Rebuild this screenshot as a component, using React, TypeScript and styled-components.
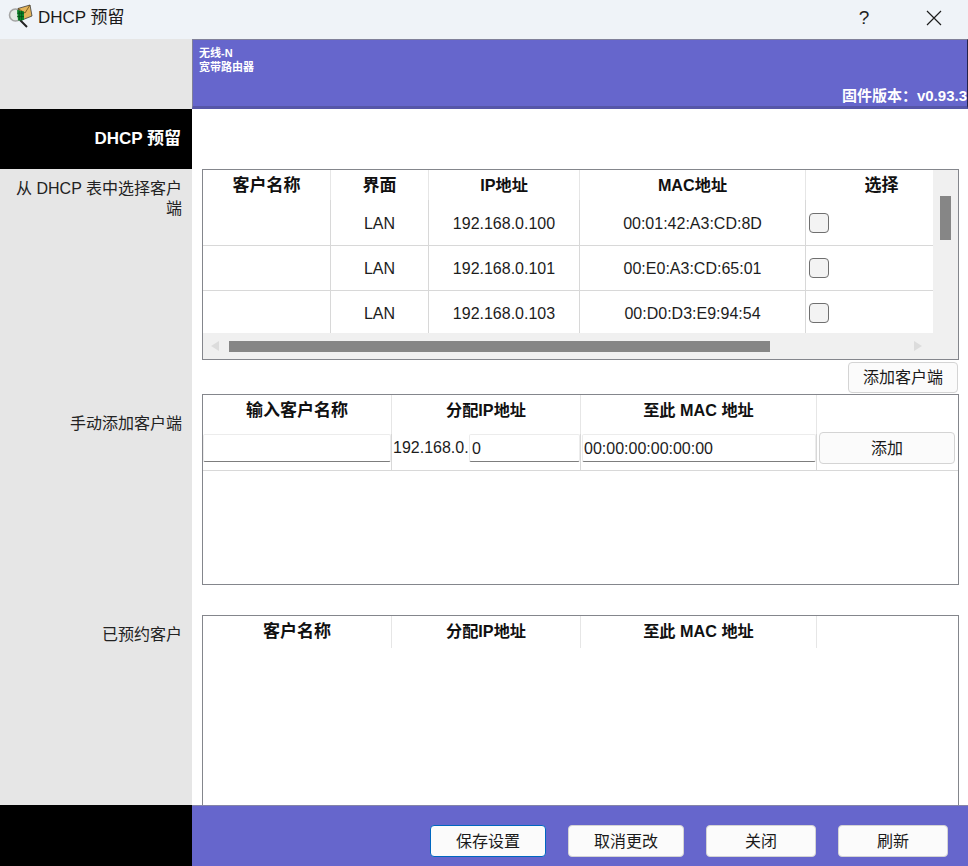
import React from "react";
import styled, { createGlobalStyle } from "styled-components";

const FONT = `"Liberation Sans", "Noto Sans CJK SC", sans-serif`;

const Global = createGlobalStyle`
  html, body { margin: 0; padding: 0; background: #fff; }
  * { box-sizing: border-box; }
  body { font-family: ${FONT}; color: #111; }
`;

const Page = styled.div`
  width: 968px; height: 866px; display: flex; flex-direction: column; overflow: hidden;
`;
const TitleBar = styled.div`
  height: 39px; flex: none; background: #eff3f8; display: flex; align-items: center; padding-left: 8px;
`;
const TitleText = styled.div`
  font-size: 17px; margin-left: 4px; color: #1a1a1a; flex: 1; white-space: nowrap; line-height: 35px; align-self: flex-start;
`;
const HelpGlyph = styled.div`
  width: 20px; font-size: 19px; color: #222; text-align: center; margin-right: 48px; margin-top: -4px;
`;
const CloseBox = styled.div`
  width: 24px; height: 24px; margin-right: 22px; display: flex; align-items: center; justify-content: center; margin-top: -4px;
`;
const Band = styled.div<{ $h: number }>`
  display: grid; grid-template-columns: 192px 1fr; height: ${p => p.$h}px; flex: none;
`;
const GreyCell = styled.div`
  background: #e6e6e6;
`;
const Banner = styled.div`
  background: #6666cc; border-top: 1px solid #80809a; border-left: 1px solid #80809a;
  border-bottom: 3px solid #5656a8; border-right: 1px solid #22224a;
  display: flex; flex-direction: column; justify-content: space-between; padding: 6px 0 1px 6px; color: #fff;
`;
const Brand = styled.div`
  font-size: 11px; font-weight: 700; line-height: 14px;
`;
const Version = styled.div`
  font-size: 15px; font-weight: 700; text-align: right; line-height: 18px; white-space: nowrap;
`;
const BlackCell = styled.div`
  background: #000; color: #fff; font-size: 17px; font-weight: 700; text-align: right; padding: 20px 11px 0 0; line-height: 20px; white-space: nowrap;
`;
const Section = styled.div<{ $h: number }>`
  display: grid; grid-template-columns: 192px 1fr; height: ${p => p.$h}px; flex: none;
`;
const SideLabel = styled.div<{ $top: number }>`
  background: #e6e6e6; font-size: 16px; line-height: 20px; color: #222; text-align: right;
  padding: ${p => p.$top}px 10px 0 12px;
`;
const Content = styled.div`
  padding: 0 9px 0 10px; display: flex; flex-direction: column; min-width: 0;
`;
const Panel = styled.div<{ $h: number; $open?: boolean }>`
  height: ${p => p.$h}px; border: 1px solid #84868c; ${p => (p.$open ? "border-bottom: none;" : "")}
  display: flex; flex-direction: column; overflow: hidden; flex: none;
`;
const ScrollBody = styled.div`
  flex: 1; display: grid; grid-template-columns: 1fr 25px; min-height: 0;
`;
const RowsClip = styled.div`
  overflow: hidden; min-width: 0;
`;
const Row = styled.div<{ $cols: string; $h: number; $sep?: boolean }>`
  display: grid; grid-template-columns: ${p => p.$cols}; height: ${p => p.$h}px;
  ${p => (p.$sep ? "border-bottom: 1px solid #d8d8d8;" : "")}
`;
const HeadCell = styled.div<{ $rule?: boolean; $shift?: number; $han?: boolean }>`
  font-size: ${p => (p.$han ? 17 : 16.2)}px; font-weight: 700; text-align: center;
  line-height: ${p => (p.$han ? 32 : 30)}px; color: #111; white-space: nowrap;
  padding-left: ${p => p.$shift ?? 0}px;
  ${p => (p.$rule ? "border-right: 1px solid #e6e6e6;" : "")}
`;
const Cell = styled.div<{ $rule?: boolean }>`
  font-size: 16px; display: flex; align-items: center; justify-content: center; padding-top: 2px; color: #1c1c1c; white-space: nowrap; min-width: 0;
  ${p => (p.$rule ? "border-right: 1px solid #d8d8d8;" : "")}
`;
const CheckCell = styled(Cell)`
  justify-content: flex-start; padding: 0 0 0 3px;
`;
const CheckBox = styled.div`
  width: 20px; height: 20px; border: 1px solid #6f6f6f; border-radius: 4px; background: #f3f3f3;
`;
const VTrack = styled.div`
  background: #f0f0f0; padding: 26px 7px 0 7px;
`;
const VThumb = styled.div`
  width: 11px; height: 44px; background: #868686;
`;
const HTrack = styled.div`
  height: 26px; flex: none; background: #f0f0f0; display: flex; align-items: center; padding-left: 8px;
`;
const ArrowL = styled.div`
  width: 0; height: 0; border-top: 5px solid transparent; border-bottom: 5px solid transparent; border-right: 8px solid #dcdcdc; margin-right: 10px;
`;
const ArrowR = styled.div`
  width: 0; height: 0; border-top: 5px solid transparent; border-bottom: 5px solid transparent; border-left: 8px solid #dcdcdc; margin-left: 144px;
`;
const HThumb = styled.div`
  width: 541px; height: 11px; background: #868686; margin-top: 1px;
`;
const Btn = styled.button<{ $w: number; $h: number; $primary?: boolean; $lift?: number }>`
  width: ${p => p.$w}px; height: ${p => p.$h}px; flex: none; font-family: ${FONT}; font-size: 16px; color: #1a1a1a;
  padding: 0 0 ${p => p.$lift ?? 2}px 0;
  background: #fbfbfb; border-radius: 4px; border: 1px solid ${p => (p.$primary ? "#0067c0" : "#d4d4d4")};
`;
const BtnRow = styled.div`
  display: flex; justify-content: flex-end; padding: 2px 1px 0 0; height: 34px; flex: none;
`;
const FieldCell = styled.div<{ $rule?: boolean; $inset?: number }>`
  display: flex; align-items: flex-start; padding-left: ${p => p.$inset ?? 0}px; font-size: 16px; color: #1c1c1c; white-space: nowrap; min-width: 0;
  ${p => (p.$rule ? "border-right: 1px solid #d8d8d8;" : "")}
`;
const Field = styled.div<{ $pad?: number }>`
  height: 28px; flex: 1; min-width: 0;
  border: 1px solid #ececec; border-bottom: 1px solid #7d7d7d; border-radius: 2px; background: #fff;
  font-size: 16px; line-height: 27px; padding-left: ${p => p.$pad ?? 1}px; color: #1c1c1c; white-space: nowrap; overflow: hidden;
`;
const FieldLead = styled.span`
  padding-left: 1px; line-height: 28px; width: 77px; flex: none; overflow: hidden;
`;
const AddCell = styled.div`
  display: flex; align-items: flex-start; padding-left: 2px;
`;
const RaisedBtn = styled(Btn)`
  margin-top: -2px;
`;
const Footer = styled.div`
  height: 61px; flex: none; display: grid; grid-template-columns: 192px 1fr;
`;
const FooterBlack = styled.div`
  background: #000;
`;
const FooterBar = styled.div`
  background: #6666cc; border-top: 1px solid #8585a8; display: flex; align-items: flex-start; padding: 19px 20px 0 238px; gap: 22px;
`;
const IconSvg = styled.svg`
  flex: none; align-self: flex-start; margin-top: 2px;
`;

const cols1 = "128px 98px 151px 226px 1fr";
const cols2 = "189px 189px 236px 1fr";

const rows = [
  ["LAN", "192.168.0.100", "00:01:42:A3:CD:8D"],
  ["LAN", "192.168.0.101", "00:E0:A3:CD:65:01"],
  ["LAN", "192.168.0.103", "00:D0:D3:E9:94:54"],
];

const AppIcon = () => (
  <IconSvg width="26" height="28" viewBox="0 0 26 28">
    <circle cx="7.5" cy="13" r="6" fill="#e4eae4" stroke="#a4a4a4" strokeWidth="1.6" />
    <path d="M12 18l7 7" stroke="#222" strokeWidth="2" />
    <path d="M10 6.5L22 3l2 11-10 4z" fill="#e3b45a" stroke="#3a3a3a" strokeWidth="0.8" />
    <path d="M10 6.5l7 4.5 5-8" fill="none" stroke="#6b4a12" strokeWidth="0.8" />
    <path d="M9 8l7 1.5V18l-6 .5z" fill="#0c8a2a" />
    <path d="M11.3 8.5v10M13.7 9v9.5M9 11.2h7M9 14.6h7" stroke="#054d18" strokeWidth="0.8" />
  </IconSvg>
);

const CloseIcon = () => (
  <svg width="16" height="16" viewBox="0 0 16 16">
    <path d="M1 1l14 14M15 1L1 15" stroke="#1c1c1c" strokeWidth="1.2" />
  </svg>
);

export default function App() {
  return (
    <Page>
      <Global />
      <TitleBar>
        <AppIcon />
        <TitleText>DHCP 预留</TitleText>
        <HelpGlyph>?</HelpGlyph>
        <CloseBox><CloseIcon /></CloseBox>
      </TitleBar>
      <Band $h={70}>
        <GreyCell />
        <Banner>
          <Brand>无线-N<br />宽带路由器</Brand>
          <Version>固件版本：v0.93.3</Version>
        </Banner>
      </Band>
      <Band $h={60}>
        <BlackCell>DHCP 预留</BlackCell>
        <div />
      </Band>
      <Section $h={225}>
        <SideLabel $top={10}>从 DHCP 表中选择客户端</SideLabel>
        <Content>
          <Panel $h={191}>
            <ScrollBody>
              <RowsClip>
                <Row $cols={cols1} $h={30}>
                  <HeadCell $rule $han>客户名称</HeadCell>
                  <HeadCell $rule $han>界面</HeadCell>
                  <HeadCell $rule>IP地址</HeadCell>
                  <HeadCell $rule>MAC地址</HeadCell>
                  <HeadCell $shift={24} $han>选择</HeadCell>
                </Row>
                {rows.map((r, i) => (
                  <Row key={r[1]} $cols={cols1} $h={i === 0 ? 46 : 45} $sep>
                    <Cell $rule />
                    <Cell $rule>{r[0]}</Cell>
                    <Cell $rule>{r[1]}</Cell>
                    <Cell $rule>{r[2]}</Cell>
                    <CheckCell><CheckBox /></CheckCell>
                  </Row>
                ))}
              </RowsClip>
              <VTrack><VThumb /></VTrack>
            </ScrollBody>
            <HTrack>
              <ArrowL />
              <HThumb />
              <ArrowR />
            </HTrack>
          </Panel>
          <BtnRow><Btn $w={110} $h={31} $lift={3}>添加客户端</Btn></BtnRow>
        </Content>
      </Section>
      <Section $h={221}>
        <SideLabel $top={20}>手动添加客户端</SideLabel>
        <Content>
          <Panel $h={191}>
            <Row $cols={cols2} $h={39}>
              <HeadCell $rule $han>输入客户名称</HeadCell>
              <HeadCell $rule>分配IP地址</HeadCell>
              <HeadCell $rule>至此 MAC 地址</HeadCell>
              <HeadCell />
            </Row>
            <Row $cols={cols2} $h={37} $sep>
              <FieldCell $rule><Field /></FieldCell>
              <FieldCell $rule>
                <FieldLead>192.168.0.</FieldLead>
                <Field $pad={2}>0</Field>
              </FieldCell>
              <FieldCell $rule $inset={1}><Field>00:00:00:00:00:00</Field></FieldCell>
              <AddCell><RaisedBtn $w={136} $h={32}>添加</RaisedBtn></AddCell>
            </Row>
          </Panel>
        </Content>
      </Section>
      <Section $h={190}>
        <SideLabel $top={10}>已预约客户</SideLabel>
        <Content>
          <Panel $h={190} $open>
            <Row $cols={cols2} $h={31}>
              <HeadCell $rule $han>客户名称</HeadCell>
              <HeadCell $rule>分配IP地址</HeadCell>
              <HeadCell $rule>至此 MAC 地址</HeadCell>
              <HeadCell />
            </Row>
          </Panel>
        </Content>
      </Section>
      <Footer>
        <FooterBlack />
        <FooterBar>
          <Btn $w={116} $h={32} $primary>保存设置</Btn>
          <Btn $w={116} $h={32}>取消更改</Btn>
          <Btn $w={110} $h={32}>关闭</Btn>
          <Btn $w={110} $h={32}>刷新</Btn>
        </FooterBar>
      </Footer>
    </Page>
  );
}
